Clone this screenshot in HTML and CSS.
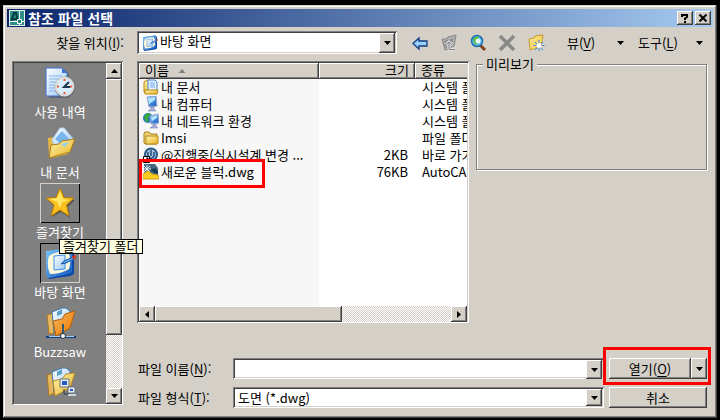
FILE: index.html
```html
<!DOCTYPE html>
<html lang="ko">
<head>
    <meta charset="UTF-8">
    <title>참조 파일 선택</title>
    <link rel="stylesheet" href="styles.css">
</head>
<body>
    <svg class="defs" aria-hidden="true">
        <defs>
            <linearGradient id="gold" x1="0" y1="0" x2="1" y2="1">
                <stop offset="0" stop-color="#fff6b0"/>
                <stop offset="1" stop-color="#e8b020"/>
            </linearGradient>
            <linearGradient id="orange" x1="0" y1="0" x2="1" y2="1">
                <stop offset="0" stop-color="#f8b860"/>
                <stop offset="1" stop-color="#e87800"/>
            </linearGradient>
            <linearGradient id="blue" x1="0" y1="0" x2="1" y2="1">
                <stop offset="0" stop-color="#7cc4f8"/>
                <stop offset="1" stop-color="#1258c0"/>
            </linearGradient>
            <linearGradient id="paper" x1="0" y1="0" x2="1" y2="1">
                <stop offset="0" stop-color="#ffffff"/>
                <stop offset="1" stop-color="#9cc8f4"/>
            </linearGradient>
        </defs>
        <symbol id="down" viewBox="0 0 7 4"><path d="M0 0h7L3.5 4z"/></symbol>
        <symbol id="up" viewBox="0 0 7 4"><path d="M0 4h7L3.5 0z"/></symbol>
        <symbol id="left" viewBox="0 0 4 7"><path d="M4 0v7L0 3.5z"/></symbol>
        <symbol id="right" viewBox="0 0 4 7"><path d="M0 0v7l4-3.5z"/></symbol>
        <symbol id="desktop" viewBox="0 0 32 32">
            <path d="M3 5l24-4 3 3v23l-4 2-21 3-2-3z" fill="#0c48a8"/>
            <path d="M2 4l24-3 2 2v22l-3 2-21 4-2-3z" fill="url(#blue)"/>
            <path d="M5 9q9-6 19-4 4 7 1 17-8 5-19 5-4-9-1-18z" fill="#fdf8dc"/>
            <path d="M10 9l11-1v14l-11 1z" fill="url(#paper)" stroke="#3c90e8"/>
            <path d="M17 17l3-3 9-4 1 2-8 4z" fill="#5ab0f0" stroke="#1c50a0"/>
            <path d="M28 9l3-1 1 3-3 1z" fill="#e03010"/>
        </symbol>
    </svg>

    <main class="window">
        <header class="titlebar">
            <svg class="app-icon" viewBox="0 0 16 16" aria-hidden="true">
                <path d="M0 0h16v16H0z" fill="#e8f4f0"/>
                <path d="M1 1h14v14H1z" fill="#2c9088"/>
                <path d="M2 12L5 3h2l2 9M3 9h5" fill="none" stroke="#033c40" stroke-width="2"/>
                <path d="M10.5 1v14M1 11.5h14" stroke="#fff"/>
                <path d="M8.5 9.5h4v4h-4z" fill="#128078" stroke="#fff"/>
            </svg>
            <h1>참조 파일 선택</h1>
            <button class="btn caption-btn" aria-label="도움말">
                <svg width="8" height="9" viewBox="0 0 8 9"><path d="M1 3V1h5v2L4 4.500V6M4 7v2" fill="none" stroke="#000" stroke-width="2"/></svg>
            </button>
            <button class="btn caption-btn" aria-label="닫기">
                <svg width="8" height="8" viewBox="0 0 8 8"><path d="M.5.5l7 7M7.500.5l-7 7" stroke="#000" stroke-width="2"/></svg>
            </button>
        </header>

        <div class="toolbar">
            <label class="look-label" for="lookIn">찾을 위치(<u>I</u>):</label>
            <div class="combo look-in">
                <svg class="combo-icon" width="16" height="16"><use href="#desktop"/></svg>
                <select id="lookIn"><option>바탕 화면</option></select>
                <span class="btn combo-arrow"><svg width="7" height="4"><use href="#down"/></svg></span>
            </div>
            <div class="tools">
                <button class="tool" aria-label="뒤로">
                    <svg viewBox="0 0 18 18"><path d="M2 9.500L8 4v3h8v5H8v3z" fill="#9cd0fc" stroke="#103c80" stroke-width="1.300"/></svg>
                </button>
                <button class="tool" aria-label="한 수준 위로">
                    <svg viewBox="0 0 18 18">
                        <path d="M2 5h5l1-2 8-2-2 11-9 4z" fill="#b4b4b4" stroke="#848484"/>
                        <path d="M4 7l10-3-3 8-6 2z" fill="#909090"/>
                        <path d="M9 15V8M6 11l3-3 3 3M9 15.500h6" fill="none" stroke="#e4e4e4" stroke-width="3"/>
                        <path d="M9 15V8M6 11l3-3 3 3M9 15.500h6" fill="none" stroke="#787878"/>
                    </svg>
                </button>
                <button class="tool" aria-label="웹 검색">
                    <svg viewBox="0 0 18 18">
                        <path d="M11 11l5 5" stroke="#804018" stroke-width="3"/>
                        <circle cx="8" cy="7" r="5.500" fill="#60c8f0" stroke="#2068b0" stroke-width="1.500"/>
                        <path d="M4 5q3-4 6-2L8 6l2 2-2 3q-4-1-4-6z" fill="#58b850"/>
                        <circle cx="9" cy="7" r="2.500" fill="#e8fcff"/>
                    </svg>
                </button>
                <button class="tool" aria-label="삭제">
                    <svg viewBox="0 0 18 18"><path d="M2 2l14 14M16 2L2 16" stroke="#888" stroke-width="3.500"/></svg>
                </button>
                <button class="tool" aria-label="새 폴더 만들기">
                    <svg viewBox="0 0 18 18">
                        <path d="M2 5l5-1 1-2 8-1-2 11-11 4z" fill="url(#gold)" stroke="#c89828"/>
                        <path d="M4 7l11-3-2 8-9 3z" fill="#f8d870"/>
                        <path d="M12 6v11M6.500 11.500h11M8 8l8 8M16 8l-8 8" stroke="#3888d8"/>
                        <circle cx="12" cy="11.500" r="2.500" fill="#fff"/>
                    </svg>
                </button>
            </div>
            <button class="menu-btn menu-view">뷰(<u>V</u>)<svg width="7" height="4"><use href="#down"/></svg></button>
            <button class="menu-btn menu-tools">도구(<u>L</u>)<svg width="7" height="4"><use href="#down"/></svg></button>
        </div>

        <div class="content">
            <nav class="places">
                <div class="places-list">
                    <button class="place">
                        <span class="place-icon">
                            <svg viewBox="0 0 32 32">
                                <path d="M3 2h17l5 5v24H5z" fill="#404858" opacity=".5"/>
                                <path d="M2 1h16l5 5v23H2z" fill="url(#paper)" stroke="#3c70d0"/>
                                <path d="M18 1v5h5z" fill="#3c78e0"/>
                                <path d="M5 9h13M5 12h10M5 15h8M5 18h7M5 21h7M5 24h9" stroke="#88b4f0"/>
                                <circle cx="21" cy="20" r="10.500" fill="#686c74"/>
                                <circle cx="20.500" cy="19.500" r="9" fill="#d8eeff" stroke="#d8d8d8" stroke-width="2"/>
                                <path d="M20.500 12v2M20.500 25v2M13 19.500h2M26 19.500h2" stroke="#e85828" stroke-width="2"/>
                                <path d="M25 15l-5 5h6" fill="none" stroke="#203850" stroke-width="2"/>
                            </svg>
                        </span>
                        사용 내역
                    </button>
                    <button class="place">
                        <span class="place-icon">
                            <svg viewBox="0 0 32 32">
                                <path d="M4 11l6-1 5-3 9 5v15L8 31l-3-2z" fill="#e8b840"/>
                                <path d="M8 13l8-12h4l10 12-8 8H12z" fill="url(#paper)" stroke="#a8d0f4"/>
                                <path d="M11 12l7-8 8 9-7 6z" fill="#78b4f0"/>
                                <path d="M5 31l2-13 8-1 3-3 13-2-5 13z" fill="url(#gold)" stroke="#a87818"/>
                                <path d="M17 17l8-2-4 5z" fill="#90d0f0"/>
                            </svg>
                        </span>
                        내 문서
                    </button>
                    <button class="place">
                        <span class="place-icon raised">
                            <svg viewBox="0 0 32 32">
                                <path d="M17 3l4 9 10 1-7 7 2 11-9-6-9 5 3-10-7-7 9-1z" fill="#484030" opacity=".6"/>
                                <path d="M16 1l4 9.500 10 .5-7.500 7L25 29l-9-6-9 6 3-11-8-7 10-.5z" fill="#fcc020" stroke="#b87c08"/>
                                <path d="M16 4l3 8 7 1-8 2-2 6-3-6-7-3 7-1z" fill="#ffe868"/>
                            </svg>
                        </span>
                        즐겨찾기
                    </button>
                    <button class="place" aria-current="true">
                        <span class="place-icon sunken-box">
                            <svg><use href="#desktop"/></svg>
                        </span>
                        바탕 화면
                    </button>
                    <button class="place">
                        <span class="place-icon">
                            <svg viewBox="0 0 32 32">
                                <path d="M3 8l7-2v20l-5 1z" fill="#e8b860" stroke="#a87828"/>
                                <path d="M8 5l10-4h4l4 3v13L10 25z" fill="url(#paper)" stroke="#3878a8"/>
                                <path d="M13 5v4l5-2V2" fill="#58a0c8"/>
                                <path d="M9 14l9-2 3-5 10-3-5 17-14 8z" fill="url(#orange)" stroke="#b86008"/>
                                <path d="M19 17v11" stroke="#305878" stroke-width="2"/>
                                <path d="M2 30h30" stroke="#183c80" stroke-width="2"/>
                                <path d="M5 29.500h25" stroke="#a8d0f0"/>
                                <circle cx="19" cy="29" r="2.500" fill="#fff" stroke="#203040"/>
                            </svg>
                        </span>
                        Buzzsaw
                    </button>
                    <button class="place" aria-label="FTP">
                        <span class="place-icon">
                            <svg viewBox="0 0 32 32">
                                <path d="M3 8l7-2v20l-5 3z" fill="#e8b860" stroke="#a87828"/>
                                <path d="M8 5l10-4h4l4 3v13L10 25z" fill="url(#paper)" stroke="#3878a8"/>
                                <path d="M13 5v4l5-2V2" fill="#58a0c8"/>
                                <path d="M9 14l9-2 4-5 9-1-5 15-15 8z" fill="url(#gold)" stroke="#b88820"/>
                                <path d="M16 12h9v8h-9zM24 20h7v6h-7z" fill="#e8f0f4" stroke="#607080"/>
                                <path d="M18 14h5v4h-5zM26 22h3v2h-3z" fill="#2858c0"/>
                                <path d="M20 22v5h6" fill="none" stroke="#203850"/>
                                <path d="M24 27h8v2h-8z" fill="#d0d8dc"/>
                            </svg>
                        </span>
                    </button>
                </div>
                <div class="scroll scroll-v">
                    <button class="btn scroll-btn" aria-label="위로 스크롤"><svg width="7" height="4"><use href="#up"/></svg></button>
                    <div class="btn thumb-v"></div>
                    <button class="btn scroll-btn scroll-end" aria-label="아래로 스크롤"><svg width="7" height="4"><use href="#down"/></svg></button>
                </div>
                <div class="tooltip" role="tooltip">즐겨찾기 폴더</div>
            </nav>

            <div class="right">
                <div class="panes">
                    <div class="file-list">
                        <div class="file-view">
                            <table>
                                <thead>
                                    <tr>
                                        <th class="col-name">이름<svg class="sort" width="8" height="4"><use href="#up"/></svg></th>
                                        <th class="col-size">크기</th>
                                        <th class="col-type">종류</th>
                                    </tr>
                                </thead>
                                <tbody>
                                    <tr>
                                        <td><div class="file">
                                            <svg viewBox="0 0 16 16">
                                                <path d="M1 3l3-2h3v13H2L1 13z" fill="url(#gold)" stroke="#b88818"/>
                                                <path d="M5 1h7l2 2v9H5z" fill="#e4f2ff" stroke="#4888d0"/>
                                                <path d="M7 4h5M7 6h5M7 8h5" stroke="#70a8e8"/>
                                                <path d="M2 11h13l-1 4H2z" fill="url(#gold)" stroke="#b88818"/>
                                            </svg>내 문서</div></td>
                                        <td></td>
                                        <td>시스템 폴더</td>
                                    </tr>
                                    <tr>
                                        <td><div class="file">
                                            <svg viewBox="0 0 16 16">
                                                <path d="M4 1l9-1 1 10-8 1z" fill="url(#blue)" stroke="#98a8d0"/>
                                                <path d="M5 2l7-1v3L6 8z" fill="#b0e4ff"/>
                                                <path d="M8 11h3v2l2 2H5l3-2z" fill="#a8b0d8" stroke="#6870a8" stroke-width=".5"/>
                                            </svg>내 컴퓨터</div></td>
                                        <td></td>
                                        <td>시스템 폴더</td>
                                    </tr>
                                    <tr>
                                        <td><div class="file">
                                            <svg viewBox="0 0 16 16">
                                                <circle cx="5" cy="5" r="5" fill="#2070d0"/>
                                                <path d="M1 3q3-4 7-2L5 5l1 4-4-1z" fill="#38a838"/>
                                                <path d="M7 3l8-2 1 9-8 1z" fill="url(#blue)" stroke="#98a8d0"/>
                                                <path d="M8 4l6-2v3L9 8z" fill="#b0e4ff"/>
                                                <path d="M10 11h3v2l2 2H7l3-2z" fill="#a8b0d8" stroke="#6870a8" stroke-width=".5"/>
                                            </svg>내 네트워크 환경</div></td>
                                        <td></td>
                                        <td>시스템 폴더</td>
                                    </tr>
                                    <tr>
                                        <td><div class="file">
                                            <svg viewBox="0 0 16 16">
                                                <path d="M1 3l1-1h4l2 2h6v10H2l-1-1z" fill="#f0d070" stroke="#a88020"/>
                                                <path d="M3 6h12v7l-1 1H3z" fill="url(#gold)" stroke="#b88818"/>
                                            </svg>Imsi</div></td>
                                        <td></td>
                                        <td>파일 폴더</td>
                                    </tr>
                                    <tr>
                                        <td><div class="file">
                                            <svg viewBox="0 0 16 16">
                                                <circle cx="8" cy="7.500" r="6" fill="#a8c4e0" stroke="#285888" stroke-width="2"/>
                                                <path d="M8 3v6M5 5v4l3 3 3-3V5" fill="none" stroke="#204c80" stroke-width="1.500"/>
                                                <path d="M.5 9.500h6v6h-6z" fill="#fff" stroke="#000"/>
                                                <path d="M2 14l3-3M3 11h2v2" fill="none" stroke="#000"/>
                                            </svg>@진행중(실시설계 변경 ...</div></td>
                                        <td>2KB</td>
                                        <td>바로 가기</td>
                                    </tr>
                                    <tr>
                                        <td><div class="file marked">
                                            <svg viewBox="0 0 16 16">
                                                <path d="M1 0h11l3 4v11H1z" fill="#486880"/>
                                                <path d="M4 1v8M0 5h8M1 2l6 6M7 2L1 8" stroke="#e0f4ff"/>
                                                <path d="M7 6l5-2 3 3v4z" fill="#183c58"/>
                                                <path d="M0 10l5-3 4 3 6 1 1 4H0z" fill="#f8cc20" stroke="#d8a010"/>
                                            </svg>새로운 블럭.dwg</div></td>
                                        <td>76KB</td>
                                        <td>AutoCAD 도면</td>
                                    </tr>
                                </tbody>
                            </table>
                        </div>
                        <div class="scroll scroll-h">
                            <button class="btn scroll-btn" aria-label="왼쪽으로 스크롤"><svg width="4" height="7"><use href="#left"/></svg></button>
                            <div class="btn thumb-h"></div>
                            <button class="btn scroll-btn scroll-end" aria-label="오른쪽으로 스크롤"><svg width="4" height="7"><use href="#right"/></svg></button>
                        </div>
                    </div>
                    <fieldset class="preview">
                        <legend>미리보기</legend>
                    </fieldset>
                </div>

                <form class="fields">
                    <label for="fileName">파일 이름(<u>N</u>):</label>
                    <div class="combo">
                        <input type="text" id="fileName">
                        <button type="button" class="btn combo-arrow" aria-label="최근 파일"><svg width="7" height="4"><use href="#down"/></svg></button>
                    </div>
                    <div class="open-group">
                        <button type="button" class="btn open-btn">열기(<u>O</u>)</button>
                        <button type="button" class="btn open-more" aria-label="열기 옵션"><svg width="7" height="4"><use href="#down"/></svg></button>
                    </div>
                    <label for="fileType">파일 형식(<u>T</u>):</label>
                    <div class="combo">
                        <select id="fileType"><option>도면 (*.dwg)</option></select>
                        <span class="btn combo-arrow"><svg width="7" height="4"><use href="#down"/></svg></span>
                    </div>
                    <button type="button" class="btn">취소</button>
                </form>
            </div>
        </div>
    </main>
</body>
</html>
```
FILE: styles.css
```css
* {
    box-sizing: border-box;
}
body {
    margin: 0;
    min-height: 100vh;
    padding: 5px 3px 2px;
    display: flex;
    background-color: #000;
    color: #000;
    font-family: "Noto Sans CJK KR", sans-serif;
    font-size: 13px;
    line-height: 16px;
}
button, input, select {
    font: inherit;
    color: inherit;
    margin: 0;
    padding: 0;
    border: none;
    background: none;
    border-radius: 0;
}
.defs {
    position: absolute;
    width: 0;
    height: 0;
}
u {
    text-underline-offset: 2px;
}
.window {
    flex: 1;
    min-width: 0;
    display: flex;
    flex-direction: column;
    padding: 4px;
    background-color: #d4d0c8;
    box-shadow: inset -1px -1px #404040, inset 1px 1px #d4d0c8, inset -2px -2px #808080, inset 2px 2px #fff;
}

/* raised 3D button face */
.btn {
    display: flex;
    align-items: center;
    justify-content: center;
    background-color: #d4d0c8;
    box-shadow: inset -1px -1px #404040, inset 1px 1px #fff, inset -2px -2px #808080;
}

/* title bar */
.titlebar {
    display: flex;
    align-items: center;
    height: 18px;
    padding: 0 2px;
    background: linear-gradient(to right, #0a246a, #a6caf0);
    color: #fff;
}
.titlebar h1 {
    flex: 1;
    margin: 0 0 0 3px;
    font-size: 14px;
    font-weight: bold;
    line-height: 16px;
}
.app-icon {
    width: 16px;
    height: 16px;
}
.caption-btn {
    width: 16px;
    height: 14px;
    margin-left: 2px;
}

/* toolbar */
.toolbar {
    display: flex;
    align-items: center;
    margin-top: 4px;
    padding: 0 10px 0 5px;
}
.look-label {
    width: 112px;
    margin-right: 13px;
    text-align: right;
}
.look-in {
    flex: 1;
    height: 23px;
}
.tools {
    display: flex;
    gap: 11px;
    margin: 0 22px 0 14px;
}
.tool {
    width: 18px;
    height: 18px;
}
.tool svg {
    display: block;
}
.menu-btn {
    display: flex;
    align-items: center;
}
.menu-btn svg {
    margin-left: auto;
}
.menu-view {
    width: 57px;
    margin-right: 14px;
}
.menu-tools {
    width: 65px;
}

/* combo boxes */
.combo {
    display: grid;
    grid-template-columns: 1fr 16px;
    min-width: 0;
    padding: 2px;
    background-color: #fff;
    box-shadow: inset 1px 1px #808080, inset -1px -1px #fff, inset 2px 2px #404040, inset -2px -2px #d4d0c8;
}
.combo select, .combo input {
    grid-area: 1 / 1 / 2 / 3;
    appearance: none;
    width: 100%;
    height: 100%;
    padding-left: 3px;
    outline: none;
}
.combo .combo-arrow {
    grid-area: 1 / 2;
    z-index: 1;
}
span.combo-arrow {
    pointer-events: none;
}
.combo .combo-icon {
    grid-area: 1 / 1;
    align-self: center;
    margin-left: 3px;
}
.combo.look-in select {
    padding: 0 0 4px 21px;
}

/* main area */
.content {
    flex: 1;
    display: flex;
    gap: 14px;
    padding: 7px 6px 6px 5px;
}
.places {
    position: relative;
    display: flex;
    width: 111px;
    margin-bottom: 3px;
    padding: 2px 1px 1px 2px;
    background-color: #808080;
    box-shadow: inset 1px 1px #808080, inset -1px -1px #fff, inset 2px 2px #404040;
}
.places-list {
    flex: 1;
    height: 0;
    min-height: 100%;
    overflow: hidden;
}
.place {
    display: flex;
    flex-direction: column;
    align-items: center;
    width: 100%;
    height: 60px;
    color: #fff;
}
.place-icon {
    flex: none;
    width: 40px;
    height: 40px;
    padding: 4px;
    margin-bottom: 1px;
}
.place-icon svg {
    display: block;
    width: 32px;
    height: 32px;
}
.raised {
    box-shadow: inset 1px 1px #d4d0c8, inset -1px -1px #000;
}
.sunken-box {
    box-shadow: inset 1px 1px #000, inset -1px -1px #d4d0c8;
}
.tooltip {
    position: absolute;
    left: 47px;
    top: 178px;
    height: 15px;
    padding: 0 4px 0 3px;
    border: 1px solid #000;
    background-color: #ffffe1;
    line-height: 12px;
    white-space: nowrap;
    z-index: 2;
}

/* scroll bars */
.scroll {
    display: flex;
    background: repeating-conic-gradient(#fff 0 25%, #d4d0c8 0 50%) 0 0 / 2px 2px;
}
.scroll-v {
    flex-direction: column;
    width: 16px;
}
.scroll-h {
    height: 16px;
}
.scroll-btn {
    flex: none;
    width: 16px;
    height: 16px;
}
.scroll-end {
    margin-top: auto;
    margin-left: auto;
}
.thumb-v {
    height: 75%;
}
.thumb-h {
    width: 57%;
}

.right {
    flex: 1;
    min-width: 0;
    display: flex;
    flex-direction: column;
}
.panes {
    flex: 1;
    display: flex;
    gap: 7px;
    margin-bottom: 35px;
}

/* file list */
.file-list {
    flex: 1;
    min-width: 0;
    display: flex;
    flex-direction: column;
    padding: 2px 2px 1px;
    background-color: #fff;
    box-shadow: inset 1px 1px #808080, inset -1px -1px #fff, inset 2px 2px #404040, inset -2px 0 #d4d0c8;
}
.file-view {
    flex: 1;
    overflow: hidden;
    background: linear-gradient(#f7f7f7, #f7f7f7) no-repeat 0 0 / 180px 100%;
}
table {
    width: 400px;
    table-layout: fixed;
    border-collapse: collapse;
}
th {
    height: 16px;
    padding: 0 6px 2px;
    background-color: #d4d0c8;
    box-shadow: inset -1px -1px #404040, inset 1px 1px #fff, inset -2px -2px #808080;
    font-weight: normal;
    line-height: 14px;
    text-align: left;
}
td {
    height: 17px;
    padding: 0 7px 2px;
    line-height: 15px;
    white-space: nowrap;
}
td:first-child {
    padding: 0 0 0 4px;
}
td:nth-child(2), .col-size {
    text-align: right;
}
.col-name {
    width: 180px;
}
.col-size {
    width: 96px;
}
.sort {
    margin-left: 9px;
    vertical-align: middle;
    fill: #808080;
}
.file {
    position: relative;
    display: inline-flex;
    align-items: flex-start;
    gap: 2px;
    height: 17px;
    vertical-align: top;
}
.file svg {
    width: 16px;
    height: 16px;
}
.marked::after, .open-group::after {
    content: "";
    position: absolute;
    border: 3px solid #f00;
    pointer-events: none;
}
.marked::after {
    inset: -5px -11px -7px -4px;
}

/* preview box */
.preview {
    width: 231px;
    height: 113px;
    min-width: 0;
    margin: -4px 0 0;
    padding: 0 6px;
    border: 1px solid #808080;
    box-shadow: 1px 1px #fff, inset 1px 1px #fff;
}
.preview legend {
    padding: 0 3px;
    background-color: #d4d0c8;
    line-height: 14px;
}

/* file name and type */
.fields {
    display: grid;
    grid-template-columns: 96px 1fr 98px;
    grid-auto-rows: 21px;
    row-gap: 8px;
    align-items: stretch;
}
.fields label {
    align-self: center;
    padding-left: 1px;
}
.fields .combo {
    margin-right: 5px;
}
.open-group {
    position: relative;
    display: flex;
}
.open-group::after {
    inset: -11px -4px -6px -6px;
}
.open-btn {
    flex: 1;
}
.open-more {
    width: 16px;
}
```
